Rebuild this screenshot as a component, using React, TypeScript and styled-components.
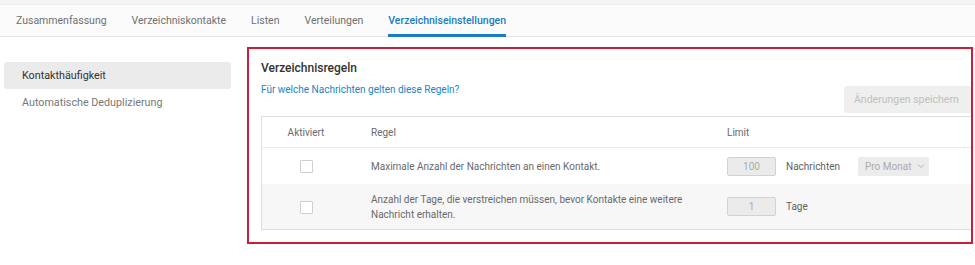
import React from "react";
import styled, { createGlobalStyle } from "styled-components";

const GlobalStyle = createGlobalStyle`
  html, body {
    margin: 0;
    padding: 0;
    background: #ffffff;
    font-family: Roboto, "Noto Sans", Arial, sans-serif;
    -webkit-font-smoothing: antialiased;
  }
`;

const Page = styled.div`
  width: 975px;
  height: 265px;
  overflow: hidden;
  background: #ffffff;
  border-top: 4px solid #f4f4f4;
  box-sizing: border-box;
`;

const TabBar = styled.nav`
  display: flex;
  align-items: stretch;
  gap: 25px;
  height: 31px;
  padding: 0 16px;
  background: #fbfbfb;
  border-top: 1px solid #ececec;
  border-bottom: 1px solid #e6e6e6;
`;

const Tab = styled.div<{ $active?: boolean }>`
  display: flex;
  align-items: center;
  padding-top: 1px;
  font-size: 10.5px;
  color: ${(p) => (p.$active ? "#1a7cc4" : "#707070")};
  font-weight: ${(p) => (p.$active ? 500 : 400)};
  border-bottom: 3px solid ${(p) => (p.$active ? "#1a7cc4" : "transparent")};
  margin-bottom: -1px;
  box-sizing: border-box;
`;

const Body = styled.div`
  display: flex;
  align-items: flex-start;
  gap: 16px;
  padding-left: 4px;
`;

const SideNav = styled.ul`
  list-style: none;
  margin: 25px 0 0;
  padding: 0;
  width: 227px;
`;

const SideItem = styled.li<{ $active?: boolean }>`
  height: 27px;
  display: flex;
  align-items: center;
  padding-left: 18px;
  font-size: 10.75px;
  border-radius: 3px;
  background: ${(p) => (p.$active ? "#ebebeb" : "transparent")};
  color: ${(p) => (p.$active ? "#333333" : "#777777")};
`;

const Panel = styled.section`
  margin-top: 10px;
  width: 726px;
  height: 197px;
  box-sizing: border-box;
  border: 2px solid #c8203a;
  padding: 11px 0 0 12px;
  overflow: hidden;
`;

const Title = styled.h2`
  margin: 0;
  font-size: 12px;
  line-height: 16px;
  font-weight: 500;
  color: #333333;
`;

const Toolbar = styled.div`
  display: flex;
  justify-content: space-between;
  align-items: flex-start;
  margin-top: 7px;
`;

const HelpLink = styled.a`
  font-size: 10px;
  line-height: 14px;
  color: #1a82c9;
  text-decoration: none;
`;

const SaveButton = styled.button`
  margin-top: 3px;
  height: 27px;
  width: 127px;
  padding: 0 0 0 10px;
  text-align: left;
  border: none;
  border-radius: 3px 0 0 3px;
  background: #efefef;
  color: #c0c0c0;
  font-family: inherit;
  font-size: 10.5px;
  white-space: nowrap;
`;

const Table = styled.div`
  margin-top: 3px;
  border: 1px solid #dedede;
  border-right: none;
`;

const Row = styled.div<{ $shaded?: boolean; $height: number }>`
  display: grid;
  grid-template-columns: 88px 367px 1fr;
  align-items: center;
  height: ${(p) => p.$height}px;
  background: ${(p) => (p.$shaded ? "#f7f7f7" : "#ffffff")};
`;

const HeaderRow = styled(Row)`
  border-bottom: 1px solid #ececec;
`;

const Cell = styled.div<{ $center?: boolean }>`
  font-size: 10px;
  line-height: 15px;
  color: #6a6a6a;
  text-align: ${(p) => (p.$center ? "center" : "left")};
`;

const RuleCell = styled(Cell)`
  padding: 0 12px 0 21px;
`;

const LimitCell = styled(Cell)`
  display: flex;
  align-items: center;
  padding-left: 10px;
`;

const Checkbox = styled.span`
  display: inline-block;
  width: 11px;
  height: 11px;
  border: 1px solid #cfcfcf;
  border-radius: 1px;
  background: #ffffff;
  vertical-align: middle;
`;

const NumberBox = styled.span`
  width: 47px;
  height: 17px;
  border: 1px solid #d2d2d2;
  border-radius: 2px;
  background: #ebebeb;
  color: #ababab;
  font-size: 10px;
  display: flex;
  align-items: center;
  justify-content: center;
`;

const Unit = styled.span`
  margin-left: 10px;
  color: #5f5f5f;
  font-size: 10px;
`;

const Select = styled.span`
  margin-left: 18px;
  width: 71px;
  height: 19px;
  border-radius: 2px;
  background: #ececec;
  color: #ababab;
  font-size: 10px;
  display: flex;
  align-items: center;
  gap: 6px;
  padding-left: 7px;
  box-sizing: border-box;

  svg {
    display: block;
  }
`;

const Chevron = () => (
  <svg width="8" height="6" viewBox="0 0 8 6" fill="none">
    <path d="M1 1.5L4 4.5L7 1.5" stroke="#b5b5b5" strokeWidth="1" />
  </svg>
);

export default function App() {
  return (
    <Page>
      <GlobalStyle />
      <TabBar>
        <Tab>Zusammenfassung</Tab>
        <Tab>Verzeichniskontakte</Tab>
        <Tab>Listen</Tab>
        <Tab>Verteilungen</Tab>
        <Tab $active>Verzeichniseinstellungen</Tab>
      </TabBar>
      <Body>
        <SideNav>
          <SideItem $active>Kontakthäufigkeit</SideItem>
          <SideItem>Automatische Deduplizierung</SideItem>
        </SideNav>
        <Panel>
          <Title>Verzeichnisregeln</Title>
          <Toolbar>
            <HelpLink href="#">Für welche Nachrichten gelten diese Regeln?</HelpLink>
            <SaveButton disabled>Änderungen speichern</SaveButton>
          </Toolbar>
          <Table>
            <HeaderRow $height={30}>
              <Cell $center>Aktiviert</Cell>
              <RuleCell>Regel</RuleCell>
              <LimitCell>Limit</LimitCell>
            </HeaderRow>
            <Row $height={36}>
              <Cell $center>
                <Checkbox />
              </Cell>
              <RuleCell>Maximale Anzahl der Nachrichten an einen Kontakt.</RuleCell>
              <LimitCell>
                <NumberBox>100</NumberBox>
                <Unit>Nachrichten</Unit>
                <Select>
                  Pro Monat <Chevron />
                </Select>
              </LimitCell>
            </Row>
            <Row $shaded $height={45}>
              <Cell $center>
                <Checkbox />
              </Cell>
              <RuleCell>
                Anzahl der Tage, die verstreichen müssen, bevor Kontakte eine weitere
                Nachricht erhalten.
              </RuleCell>
              <LimitCell>
                <NumberBox>1</NumberBox>
                <Unit>Tage</Unit>
              </LimitCell>
            </Row>
          </Table>
        </Panel>
      </Body>
    </Page>
  );
}
